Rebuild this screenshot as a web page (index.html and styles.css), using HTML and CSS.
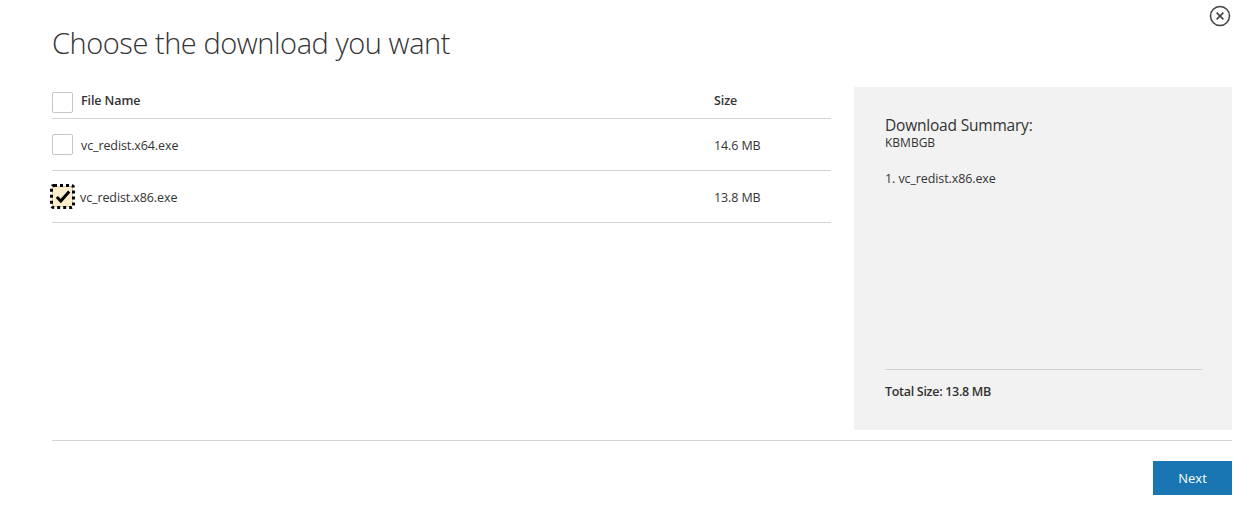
FILE: index.html
```html
<!DOCTYPE html>
<html>
<head>
<meta charset="utf-8">
<link rel="stylesheet" href="styles.css">
</head>
<body>
<div class="dialog">
  <button class="close" aria-label="Close">
    <svg width="22" height="22" viewBox="0 0 22 22"><circle cx="11" cy="11" r="9.5" fill="none" stroke="#444" stroke-width="1.5"/><path d="M7.6 7.6 L14.4 14.4 M14.4 7.6 L7.6 14.4" stroke="#444" stroke-width="1.6" fill="none"/></svg>
  </button>
  <h1 class="title">Choose the download you want</h1>
  <div class="content">
    <div class="table">
      <div class="row head">
        <div class="cell name"><span class="box"></span><span class="label">File Name</span></div>
        <div class="cell size">Size</div>
      </div>
      <div class="row">
        <div class="cell name"><span class="box"></span><span class="label">vc_redist.x64.exe</span></div>
        <div class="cell size">14.6 MB</div>
      </div>
      <div class="row">
        <div class="cell name"><span class="box checked"><svg width="16" height="15" viewBox="0 0 16 15"><path d="M1.8 8 L5.8 12 L14.2 2.4" fill="none" stroke="#000" stroke-width="3"/></svg></span><span class="label">vc_redist.x86.exe</span></div>
        <div class="cell size">13.8 MB</div>
      </div>
    </div>
    <aside class="summary">
      <div class="sum-top">
        <div class="sum-title">Download Summary:</div>
        <div class="sum-code">KBMBGB</div>
        <ol class="sum-list"><li>vc_redist.x86.exe</li></ol>
      </div>
      <div class="sum-total">Total Size: 13.8 MB</div>
    </aside>
  </div>
  <div class="footer">
    <button class="next">Next</button>
  </div>
</div>
</body>
</html>
```
FILE: styles.css
```css
* { box-sizing: border-box; }
body {
  margin: 0;
  background: #fff;
  font-family: "Open Sans", "Noto Sans", sans-serif;
  color: #333;
}
.dialog {
  position: relative;
  padding: 0 25px 0 52px;
}
.close {
  position: absolute;
  top: 5px;
  right: 26px;
  border: 0;
  background: none;
  padding: 0;
  width: 22px;
  height: 22px;
}
.title {
  margin: 0;
  padding-top: 23px;
  height: 87px;
  font-weight: 300;
  font-size: 29px;
  line-height: 40px;
  color: #333;
  letter-spacing: -0.45px;
}
.content {
  display: flex;
  gap: 23px;
  height: 343px;
}
.table {
  width: 779px;
}
.row {
  display: flex;
  align-items: center;
  height: 52px;
  border-bottom: 1px solid #d4d4d4;
  font-size: 12.5px;
  color: #333;
  letter-spacing: -0.1px;
}
.row .label,
.row .cell.size { padding-top: 2px; }
.row.head {
  height: 32px;
  font-weight: 600;
  align-items: flex-start;
  padding-top: 5px;
}
.row.head .cell { line-height: 18px; }
.row.head .cell.size { padding-top: 0; }
.row.head .label { padding-top: 0; margin-top: -3px; }
.cell.name {
  flex: 1;
  display: flex;
  align-items: center;
  gap: 8px;
}
.cell.size {
  width: 117px;
}
.box {
  width: 21px;
  height: 21px;
  border: 1px solid #c6c6c6;
  border-radius: 2px;
  background: #fff;
  display: flex;
  align-items: center;
  justify-content: center;
}
.box.checked {
  background: #fbedcb;
  outline: 3px dotted #000;
  outline-offset: -1px;
  border-color: #d8c9a5;
}
.row .checked + .label { margin-left: -1px; }
.summary {
  flex: 1;
  background: #f2f2f2;
  padding: 28px 30px 30px 31px;
  display: flex;
  flex-direction: column;
}
.sum-top { flex: 1; }
.sum-title {
  font-size: 15.5px;
  line-height: 20px;
  color: #333;
  letter-spacing: -0.2px;
}
.sum-code {
  font-size: 12px;
  line-height: 16px;
}
.sum-list {
  margin: 19px 0 0;
  padding: 0;
  list-style: decimal inside;
  font-size: 12.5px;
  line-height: 18px;
  letter-spacing: -0.1px;
}
.sum-total {
  border-top: 1px solid #d0d0d0;
  padding-top: 13px;
  font-size: 12.5px;
  font-weight: 600;
  line-height: 17px;
  letter-spacing: -0.3px;
}
.footer {
  margin-top: 10px;
  border-top: 1px solid #d4d4d4;
  padding-top: 20px;
  display: flex;
  justify-content: flex-end;
}
.next {
  width: 79px;
  height: 34px;
  border: 0;
  background: #1976b2;
  color: #fff;
  font-family: inherit;
  font-size: 13px;
  padding: 0;
}
```
